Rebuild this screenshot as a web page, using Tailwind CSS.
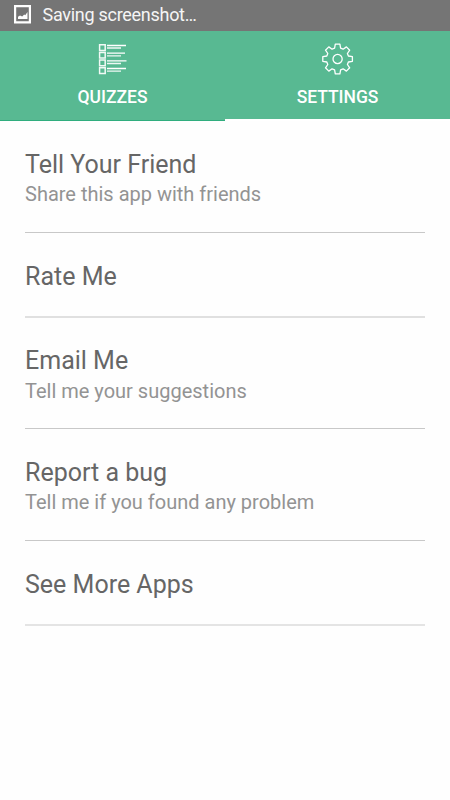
<!DOCTYPE html>
<html lang="en">
<head>
<meta charset="utf-8">
<title>Settings</title>
<script src="https://cdn.jsdelivr.net/npm/@tailwindcss/browser@4"></script>
</head>
<body class="h-[800px] w-[450px] overflow-hidden bg-[#fefefe] font-[Roboto,sans-serif]">
<header class="flex h-[31px] items-start bg-[#757575] pl-[14px] text-[#f5f5f5]">
  <svg class="mt-[5px] h-[19px] w-[18px]" viewBox="0 0 18 19"><path d="M1.1 1.2h14.8v16.2H1.1z" fill="none" stroke="#fff" stroke-width="2.2"/><path d="M4 14v-2.3l2-1.2 2.2 1 2-2 1 .7L13.5 7v7z" fill="#fff"/></svg>
  <span class="ml-[10.5px] text-[18px] leading-[29px] tracking-[-0.28px]">Saving screenshot…</span>
</header>
<nav class="grid h-[90px] grid-cols-2 bg-[#58b992] text-[17.5px] font-medium text-white">
  <div class="flex flex-col items-center border-b border-[#30ad7e] pt-3">
    <svg class="h-8 w-[30px]" viewBox="0 0 30 32" fill="none" stroke="#fff">
      <path d="M1.6 1.8h5.6v5.6H1.6zM1.6 9.4h5.6V15H1.6zM1.6 17.1h5.6v5.6H1.6zM1.6 24.8h5.6v5.6H1.6z" stroke-width="1.5" stroke-opacity=".92"/>
      <path d="M9 2.5h19M9 10.2h18M9 17.8h19.5M9 25.5h19" stroke-width="1.3"/>
      <path d="M9 5h14M9 12.8h14M9 20.5h14M9 28.2h14" stroke-width="1.3" stroke-opacity=".9"/>
    </svg>
    <span class="mt-[9.5px] leading-6">QUIZZES</span>
  </div>
  <div class="flex flex-col items-center border-b-2 border-white pt-3">
    <svg class="h-8 w-8" viewBox="-16 -16 32 32" fill="none" stroke="#fff" stroke-width="1.3" stroke-linejoin="round">
      <g transform="translate(-.4 0)">
        <circle r="4.6"/>
        <path d="M-2.3-14.8H2.3L3-10.8 5.5-9.8 8.8-12.1 12.1-8.8 9.8-5.5 10.8-3 14.8-2.3V2.3L10.8 3 9.8 5.5 12.1 8.8 8.8 12.1 5.5 9.8 3 10.8 2.3 14.8H-2.3L-3 10.8-5.5 9.8-8.8 12.1-12.1 8.8-9.8 5.5-10.8 3-14.8 2.3V-2.3L-10.8-3-9.8-5.5-12.1-8.8-8.8-12.1-5.5-9.8-3-10.8Z"/>
      </g>
    </svg>
    <span class="mt-[9.5px] leading-6 tracking-[-0.05px]">SETTINGS</span>
  </div>
</nav>
<main class="px-[25px]">
  <section class="h-28 border-b border-[#c8c8c8] pt-[29px]">
    <h2 class="text-[25px] leading-[30px] text-[#666]">Tell Your Friend</h2>
    <p class="text-[20px] leading-[29px] text-[#939393]">Share this app with friends</p>
  </section>
  <section class="h-[85px] border-b-2 border-[#e0e0e0] pt-[29px]">
    <h2 class="text-[25px] leading-[30px] text-[#666]">Rate Me</h2>
  </section>
  <section class="h-[111px] border-b border-[#c8c8c8] pt-[28px]">
    <h2 class="text-[25px] leading-[30px] text-[#666]">Email Me</h2>
    <p class="text-[20px] leading-[30px] text-[#939393]">Tell me your suggestions</p>
  </section>
  <section class="h-28 border-b border-[#c8c8c8] pt-[29px]">
    <h2 class="text-[25px] leading-[30px] text-[#666]">Report a bug</h2>
    <p class="text-[20px] leading-[29px] text-[#939393]">Tell me if you found any problem</p>
  </section>
  <section class="h-[85px] border-b-2 border-[#e4e4e4] pt-[29px]">
    <h2 class="text-[25px] leading-[30px] text-[#666]">See More Apps</h2>
  </section>
</main>
</body>
</html>
